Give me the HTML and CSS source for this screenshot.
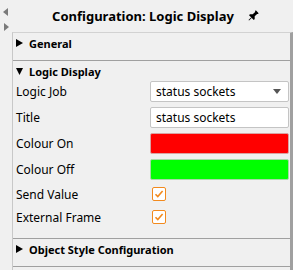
FILE: index.html
```html
<!DOCTYPE html>
<html lang="en">
<head>
  <meta charset="UTF-8">
  <title>Configuration: Logic Display</title>
  <link rel="stylesheet" href="styles.css">
</head>
<body>
  <div class="dock">
    <div class="side">
      <svg class="nav" width="5" height="8" viewBox="0 0 5 8"><path d="M5 0v8L0 4z"/></svg>
      <svg class="nav" width="5" height="8" viewBox="0 0 5 8"><path d="M0 0v8l5-4z"/></svg>
    </div>

    <div class="panel">
      <div class="titlebar">
        <span class="title">Configuration: Logic Display</span>
        <svg class="pin" width="12" height="12" viewBox="0 0 12 12">
          <g transform="rotate(45 6 6)">
            <path d="M4 0h4v1l-.6.6v3.4l2 2v1.2h-6.8v-1.2l2-2v-3.4L4 1z"/>
            <path d="M5.6 8h.8v4h-.8z"/>
          </g>
        </svg>
      </div>

      <div class="sections">
        <div class="section collapsed">
          <div class="head">
            <svg class="caret" width="7" height="8" viewBox="0 0 7 8"><path d="M0 0v8l7-4z"/></svg>
            General
          </div>
        </div>

        <div class="section">
          <div class="head">
            <svg class="caret" width="7" height="8" viewBox="0 0 7 8"><path d="M0 1h7l-3.5 7z"/></svg>
            Logic Display
          </div>
          <div class="fields">
            <label>Logic Job</label>
            <div class="select">
              <span>status sockets</span>
              <svg width="8" height="5" viewBox="0 0 8 5"><path d="M0 0h8L4 5z"/></svg>
            </div>

            <label>Title</label>
            <div class="input">status sockets</div>

            <label>Colour On</label>
            <div class="swatch on"></div>

            <label>Colour Off</label>
            <div class="swatch off"></div>

            <label>Send Value</label>
            <div><span class="check"><svg width="10" height="10" viewBox="0 0 10 10"><path d="M1.5 5.2l2.3 2.4L8.6 2" /></svg></span></div>

            <label>External Frame</label>
            <div><span class="check"><svg width="10" height="10" viewBox="0 0 10 10"><path d="M1.5 5.2l2.3 2.4L8.6 2" /></svg></span></div>
          </div>
        </div>

        <div class="section collapsed">
          <div class="head">
            <svg class="caret" width="7" height="8" viewBox="0 0 7 8"><path d="M0 0v8l7-4z"/></svg>
            Object Style Configuration
          </div>
        </div>
      </div>
    </div>
  </div>
</body>
</html>
```

FILE: styles.css
```css
body {
  margin: 0;
  background-color: #f0f0f0;
  color: #000;
  font-family: "Noto Sans", "DejaVu Sans", sans-serif;
  font-size: 12px;
}
.dock {
  display: flex;
  height: 270px;
}
.side {
  width: 12px;
  box-sizing: border-box;
  padding: 8px 0 0 3px;
  display: flex;
  flex-direction: column;
  gap: 7px;
}
.nav {
  fill: #7a7a7a;
}
.side .nav + .nav {
  margin-left: 1px;
}
.panel {
  flex: 1;
  display: flex;
  flex-direction: column;
}
.titlebar {
  height: 32px;
  display: flex;
  align-items: center;
  justify-content: center;
  gap: 13px;
  padding-left: 6px;
}
.title {
  font-weight: bold;
  font-size: 13px;
}
.pin {
  fill: #000;
}
.sections {
  flex: 1;
  border-top: 1px solid #d2d2d2;
  border-left: 1px solid #c8c8c8;
  border-right: 3px solid #a0a0a0;
}
.section {
  border-bottom: 1px solid #a0a0a0;
}
.section.collapsed {
  padding-bottom: 7px;
}
.head {
  height: 20px;
  display: flex;
  align-items: center;
  gap: 6px;
  padding-left: 3px;
  font-weight: bold;
  font-size: 11px;
}
.caret {
  fill: #000;
}
.fields {
  display: grid;
  grid-template-columns: 134px 139px;
  grid-template-rows: repeat(4, 21px) repeat(2, 18px);
  row-gap: 5px;
  align-items: center;
  padding: 0 1px 12px 3px;
}
.select, .input, .swatch {
  height: 21px;
  box-sizing: border-box;
  border: 1px solid #c4c4c4;
  border-radius: 2px;
  background: #fff;
}
.select, .input {
  display: flex;
  align-items: center;
  justify-content: space-between;
  padding: 0 7px 0 5px;
}
.select svg {
  fill: #555;
}
.swatch.on {
  background: #ff0000;
  border-color: #d9a3a3;
}
.swatch.off {
  background: #00ff00;
  border-color: #a8d8a8;
}
.check {
  display: flex;
  align-items: center;
  justify-content: center;
  width: 14px;
  height: 14px;
  box-sizing: border-box;
  margin-left: 2px;
  border: 1px solid #f28a1e;
  border-radius: 2px;
  background: #fff;
}
.check svg {
  fill: none;
  stroke: #f28a1e;
  stroke-width: 1.6;
}
```
